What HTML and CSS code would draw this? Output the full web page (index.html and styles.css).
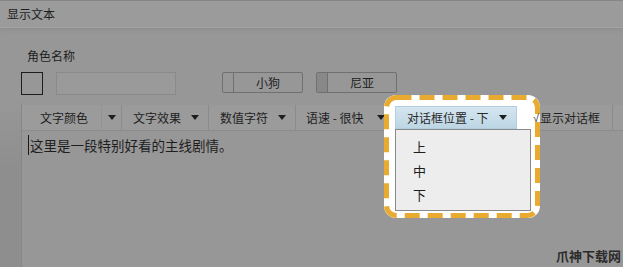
FILE: index.html
```html
<!DOCTYPE html>
<html lang="zh">
<head>
    <meta charset="UTF-8">
    <meta name="viewport" content="width=device-width, initial-scale=1.0">
    <title>显示文本</title>
    <link rel="stylesheet" href="styles.css">
</head>
<body>
    <!-- 标题栏 -->
    <div class="titlebar">显示文本</div>

    <!-- 角色 -->
    <div class="role">
        <div class="role-label">角色名称</div>
        <div class="role-row">
            <div class="avatar"></div>
            <div class="name-input"></div>
            <div class="voice"><span class="voice-tab"></span><span class="voice-text">小狗</span></div>
            <div class="voice voice-on"><span class="voice-tab"></span><span class="voice-text">尼亚</span></div>
        </div>
    </div>

    <!-- 编辑区 -->
    <div class="workspace">
        <div class="strip"></div>
        <div class="editor">
            <div class="toolbar">
                <div class="tool tool-split"><span>文字颜色</span><span class="split"><i class="arrow"></i></span></div>
                <div class="tool tool-mid"><span>文字效果</span><i class="arrow"></i></div>
                <div class="tool tool-mid"><span>数值字符</span><i class="arrow"></i></div>
                <div class="tool tool-speed"><span>语速 - 很快</span><i class="arrow"></i></div>
                <div class="dialog-pos">
                    <div class="dialog-btn"><span>对话框位置 - 下</span><i class="arrow"></i></div>
                    <div class="menu">
                        <div class="menu-item">上</div>
                        <div class="menu-item">中</div>
                        <div class="menu-item">下</div>
                    </div>
                </div>
                <div class="tool tool-check"><span class="tick">√</span><span>显示对话框</span></div>
            </div>
            <div class="content"><span class="cursor"></span>这里是一段特别好看的主线剧情。</div>
        </div>
    </div>

    <!-- 高亮框 -->
    <div class="highlight">
        <svg width="156" height="123" viewBox="0 0 156 123">
            <rect x="2.5" y="2.5" width="151" height="118" rx="10" fill="none" stroke="#e9ab2f" stroke-width="5" stroke-dasharray="15 8"></rect>
        </svg>
    </div>

    <div class="watermark">爪神下载网</div>
</body>
</html>
```

FILE: styles.css
```css
html, body {
    margin: 0;
    height: 100%;
    overflow: hidden;
}
body {
    position: relative;
    background-color: #979797;
    font-family: "Noto Sans CJK SC", "Noto Sans", sans-serif;
    color: #1e1e1e;
    font-size: 12px;
}
.titlebar {
    box-sizing: border-box;
    height: 28px;
    border-top: 1px solid #868686;
    border-bottom: 1px solid #a3a3a3;
    background-color: #9b9b9b;
    padding-left: 7px;
    line-height: 26px;
    font-size: 12px;
    box-shadow: 0 2px 4px #8e8e8e;
}
.role {
    padding-top: 20px;
}
.role-label {
    padding-left: 27px;
    height: 16px;
    line-height: 16px;
}
.role-row {
    display: flex;
    align-items: flex-start;
    margin-top: 8px;
    padding-left: 21px;
    height: 22px;
}
.avatar {
    box-sizing: border-box;
    width: 22px;
    height: 23px;
    border: 1px solid #1c1c1c;
}
.name-input {
    box-sizing: border-box;
    margin-left: 13px;
    width: 120px;
    height: 23px;
    border: 1px solid #8a8a8a;
    background-color: #9a9a9a;
}
.voice {
    box-sizing: border-box;
    display: flex;
    margin-left: 46px;
    width: 81px;
    height: 21px;
    border: 1px solid #707070;
    border-radius: 2px;
}
.voice + .voice {
    margin-left: 13px;
}
.voice-tab {
    width: 10px;
    border-right: 1px solid #707070;
}
.voice-on .voice-tab {
    background-color: #888888;
}
.voice-text {
    flex: 1;
    text-align: center;
    line-height: 19px;
}
.workspace {
    display: flex;
    margin-top: 9px;
    height: 164px;
}
.strip {
    width: 21px;
    background: linear-gradient(#979797, #8e8e8e 40%);
}
.editor {
    flex: 1;
    border-left: 1px solid #878787;
    padding-top: 2px;
}
.toolbar {
    box-sizing: border-box;
    display: flex;
    height: 26px;
    border-bottom: 1px solid #8c8c8c;
    background-color: #9b9b9b;
}
.tool {
    box-sizing: border-box;
    display: flex;
    align-items: center;
    height: 100%;
    border-right: 1px solid #8b8b8b;
}
.tool-split {
    width: 100px;
    padding-left: 18px;
}
.split {
    display: flex;
    align-items: center;
    justify-content: center;
    margin-left: auto;
    width: 19px;
    height: 100%;
    border-left: 1px solid #939393;
}
.tool-mid {
    width: 87px;
    padding-left: 11px;
    padding-right: 9px;
}
.tool-mid .arrow, .tool-speed .arrow {
    margin-left: auto;
}
.tool-speed {
    width: 97px;
    padding-left: 10px;
    padding-right: 8px;
    border-right: none;
}
.arrow {
    display: block;
    width: 0;
    height: 0;
    border-left: 4px solid transparent;
    border-right: 4px solid transparent;
    border-top: 5px solid #1e1e1e;
}
.dialog-pos {
    position: relative;
    z-index: 2;
    margin-left: 2px;
    margin-top: 1px;
}
.dialog-btn {
    box-sizing: border-box;
    display: flex;
    align-items: center;
    width: 122px;
    height: 23px;
    padding-left: 11px;
    padding-right: 9px;
    border: 1px solid #b3cfde;
    background: linear-gradient(#d4e6f0, #bdd6e4);
    color: #2a2a2a;
}
.dialog-btn .arrow {
    margin-left: auto;
}
.menu {
    position: absolute;
    top: 23px;
    left: 0;
    box-sizing: border-box;
    width: 136px;
    height: 82px;
    padding-top: 5px;
    border: 1px solid #8a8a8a;
    background-color: #ededed;
}
.menu-item {
    height: 24px;
    line-height: 24px;
    padding-left: 17px;
    font-size: 13px;
}
.tool-check {
    width: 96px;
    padding-left: 16px;
}
.tick {
    position: relative;
    z-index: 2;
    font-family: "Liberation Sans", sans-serif;
    font-size: 11px;
    margin-right: 1px;
}
.content {
    display: flex;
    align-items: center;
    margin-top: 4px;
    padding-left: 6px;
    height: 20px;
    font-size: 13.5px;
}
.cursor {
    width: 1px;
    height: 20px;
    background-color: #1a1a1a;
    margin-right: 1px;
}
.highlight {
    position: absolute;
    z-index: 1;
    left: 384px;
    top: 95px;
    width: 156px;
    height: 123px;
    border-radius: 12px;
    background-color: #ffffff;
}
.highlight svg {
    display: block;
}
.watermark {
    position: absolute;
    right: 2px;
    bottom: 2px;
    font-size: 13px;
    font-weight: bold;
    color: #2b2b2b;
}
```
